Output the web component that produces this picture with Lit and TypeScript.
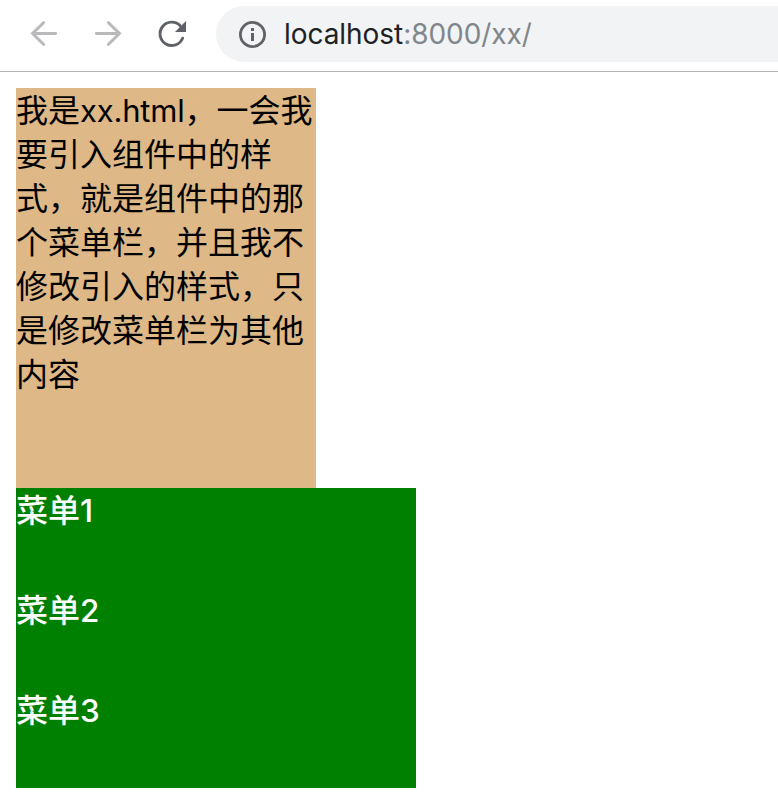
import { LitElement, html, css } from "lit";
import { customElement } from "lit/decorators.js";

@customElement("browser-bar")
class BrowserBar extends LitElement {
  static styles = css`
    :host { display: flex; box-sizing: border-box; height: 72px; padding: 6px 0 9px 28px; border-bottom: 1px solid #b1b3b5; background: #fff; }
    .icon { flex: none; display: block; width: 32px; height: 56px; margin-right: 32px; fill: none; stroke: #bababc; stroke-width: 2.9; stroke-linecap: round; stroke-linejoin: miter; }
    .reload { margin-right: 28px; stroke: #5f6368; }
    .solid { fill: #5f6368; stroke: none; }
    .address { flex: 1; display: flex; align-items: center; height: 56px; padding-left: 22px; box-sizing: border-box; border-radius: 28px 0 0 28px; background: #f1f3f4; }
    .info { flex: none; width: 29px; height: 56px; margin-right: 17px; fill: none; stroke: #5f6368; stroke-width: 2.8; }
    .url { font: 28px/58px Inter, sans-serif; letter-spacing: -0.05px; color: #202124; white-space: nowrap; }
    .path { color: #80868b; }
  `;
  render() {
    return html`
      <svg class="icon" viewBox="0 0 32 56"><path d="M27.7 27.5H4.5M15.6 16.6L4.5 27.5L15.6 38.4" /></svg>
      <svg class="icon" viewBox="0 0 32 56"><path d="M4.3 27.5H27.5M16.4 16.6L27.5 27.5L16.4 38.4" /></svg>
      <svg class="icon reload" viewBox="0 0 32 56">
        <path d="M26.6 32.2A11.7 11.7 0 1 1 24.3 19.8" />
        <path class="solid" d="M30 15V26H19Z" />
      </svg>
      <div class="address">
        <svg class="info" viewBox="0 0 29 56">
          <circle cx="14.5" cy="28.5" r="12.1" />
          <path class="solid" d="M13 22h3v3h-3zM13 27h3v8h-3z" />
        </svg>
        <span class="url">localhost<span class="path">:8000/xx/</span></span>
      </div>
    `;
  }
}

@customElement("app-root")
class AppRoot extends LitElement {
  static styles = css`
    :host { display: block; height: 804px; overflow: hidden; background: #fff; font: 32px/44px "Noto Sans CJK SC", sans-serif; }
    .content { padding: 16px; }
    .intro { display: flow-root; width: 300px; height: 400px; background: burlywood; color: #000; }
    .text { margin: -2px 0 0; }
    .latin { font-family: Inter, sans-serif; font-size: 31px; line-height: 1; letter-spacing: -0.2px; }
    .menu { width: 400px; height: 300px; margin: 0; padding: 0; list-style: none; background: green; color: #fff; font-weight: 500; }
    .item { height: 100px; line-height: 40px; }
    .digit { font-family: Inter, sans-serif; font-size: 31.5px; font-weight: 500; line-height: 1; letter-spacing: -0.5px; }
  `;
  render() {
    return html`
      <browser-bar></browser-bar>
      <main class="content">
        <div class="intro"><p class="text">我是<span class="latin">xx.html</span>，一会我要引入组件中的样式，就是组件中的那个菜单栏，并且我不修改引入的样式，只是修改菜单栏为其他内容</p></div>
        <ul class="menu">
          ${[1, 2, 3].map((n) => html`<li class="item">菜单<span class="digit">${n}</span></li>`)}
        </ul>
      </main>
    `;
  }
}
